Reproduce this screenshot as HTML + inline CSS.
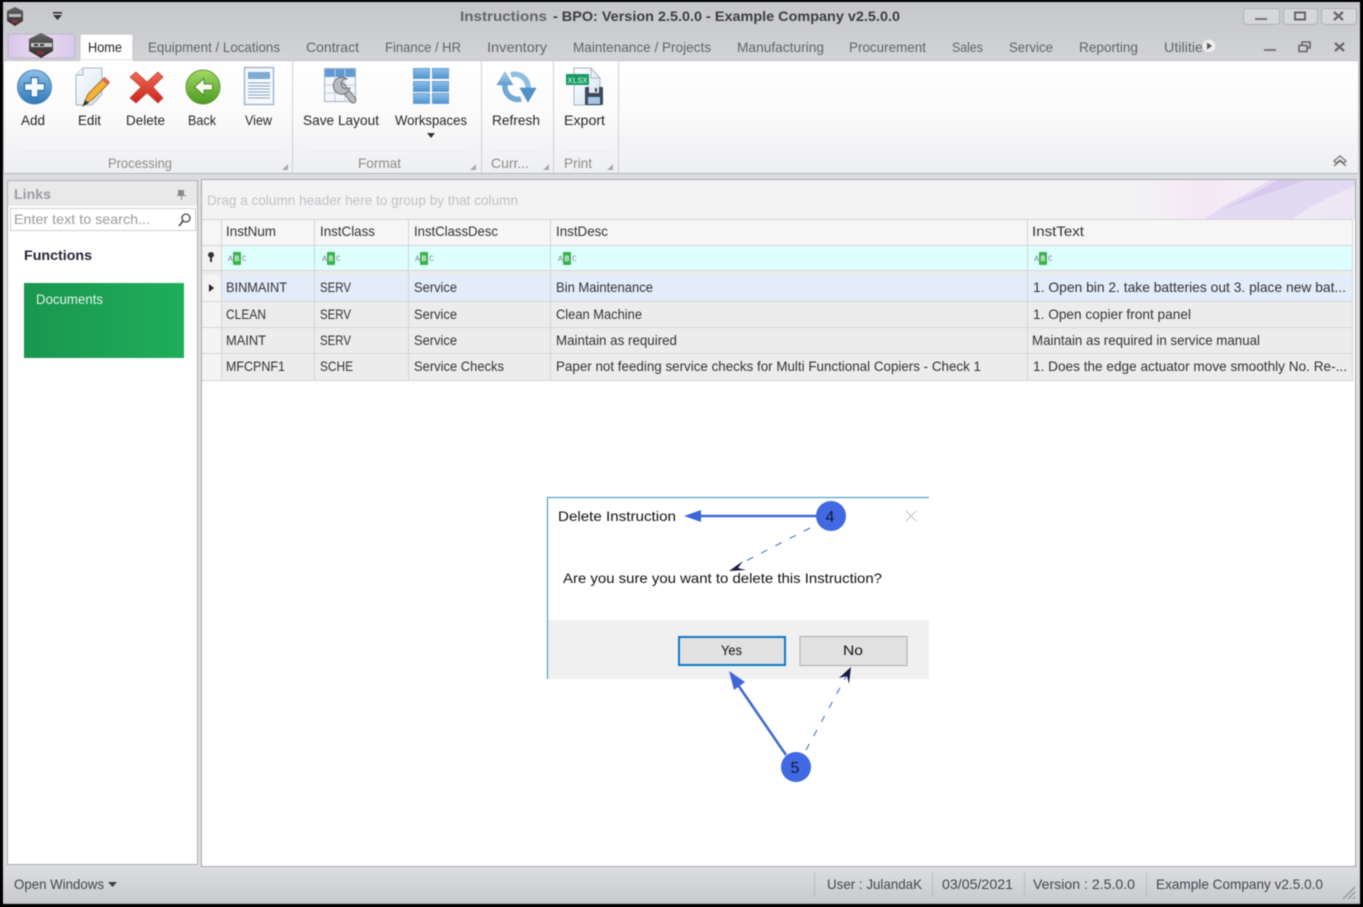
<!DOCTYPE html>
<html lang="en"><head><meta charset="utf-8"><title>Instructions - BPO</title>
<style>
html,body{margin:0;padding:0;background:#000;width:1363px;height:907px;overflow:hidden}
svg{display:block;filter:blur(.4px)}
text{font-family:"Liberation Sans",sans-serif;font-size:14px;fill:#444;white-space:pre}
.t{fill:#62646a}
.r{fill:#262626}
.g{fill:#8c8c8c}
.c{fill:#333}
.s{fill:#44464d}
.d{fill:#111}
.abc{font-family:"Liberation Mono",monospace;font-size:8px;fill:#78858c}
.abb{font-family:"Liberation Mono",monospace;font-size:8px;font-weight:bold;fill:#d8f5e0}
</style></head><body>
<svg width="1363" height="907" viewBox="0 0 1363 907" xmlns="http://www.w3.org/2000/svg">
<defs>
<linearGradient id="top" x1="0" y1="0" x2="0" y2="1"><stop offset="0" stop-color="#c6c7ca"/><stop offset="1" stop-color="#d2d3d7"/></linearGradient>
<linearGradient id="rib" x1="0" y1="0" x2="0" y2="1"><stop offset="0" stop-color="#fff"/><stop offset=".45" stop-color="#fbfbfc"/><stop offset="1" stop-color="#eeeff1"/></linearGradient>
<linearGradient id="stat" x1="0" y1="0" x2="0" y2="1"><stop offset="0" stop-color="#dcdde0"/><stop offset="1" stop-color="#c9cace"/></linearGradient>
<linearGradient id="lil" x1="0" y1="0" x2="1" y2="0"><stop offset="0" stop-color="#d7c6ec"/><stop offset=".5" stop-color="#ead9ee"/><stop offset="1" stop-color="#d9c8ea"/></linearGradient>
<linearGradient id="blueb" x1="0" y1="0" x2="0" y2="1"><stop offset="0" stop-color="#8fc0e8"/><stop offset="1" stop-color="#2f78b8"/></linearGradient>
<linearGradient id="greenb" x1="0" y1="0" x2="0" y2="1"><stop offset="0" stop-color="#a4d866"/><stop offset="1" stop-color="#4a9a22"/></linearGradient>
<linearGradient id="redb" x1="0" y1="0" x2="0" y2="1"><stop offset="0" stop-color="#ec6a55"/><stop offset="1" stop-color="#c8261c"/></linearGradient>
<linearGradient id="docg" x1="0" y1="0" x2="1" y2="1"><stop offset="0" stop-color="#fff"/><stop offset="1" stop-color="#d4e2f1"/></linearGradient>
<linearGradient id="green" x1="0" y1="0" x2="1" y2="0"><stop offset="0" stop-color="#1a9650"/><stop offset="1" stop-color="#1fae5a"/></linearGradient>
<linearGradient id="cell" x1="0" y1="0" x2="0" y2="1"><stop offset="0" stop-color="#8fc0ea"/><stop offset="1" stop-color="#4d94d2"/></linearGradient>
<linearGradient id="sw" x1="0" y1="0" x2="1" y2="0"><stop offset="0" stop-color="#f3f3f4"/><stop offset=".35" stop-color="#f3e8f4"/><stop offset=".5" stop-color="#f4eef6"/><stop offset="1" stop-color="#ece6f5"/></linearGradient>
<linearGradient id="hex" x1="0" y1="0" x2="0" y2="1"><stop offset="0" stop-color="#666"/><stop offset="1" stop-color="#2c2c2c"/></linearGradient>
<linearGradient id="rfa" x1="0" y1="0" x2="0" y2="1"><stop offset="0" stop-color="#b5d6ee"/><stop offset="1" stop-color="#5b9ccf"/></linearGradient>
</defs>

<!-- window frame -->
<rect x="0" y="0" width="1363" height="907" fill="#000"/>
<rect x="3" y="2" width="1357" height="902" fill="#dcdde0"/>
<rect x="3" y="2" width="1357" height="58" fill="url(#top)"/>

<!-- title bar -->
<polygon points="15,7 23,11 23,21 15,26 7,21 7,11" fill="url(#hex)"/>
<rect x="9" y="14" width="12" height="3" fill="#bbb"/><rect x="12" y="20" width="6" height="3" fill="#8b3a3a"/>
<rect x="53" y="12" width="9" height="1.6" fill="#333"/><polygon points="53,15 62,15 57.5,20" fill="#333"/>
<text x="460" y="21" class="t" style="font-weight:bold" textLength="87" lengthAdjust="spacingAndGlyphs">Instructions</text>
<text x="553" y="21" style="font-weight:bold;fill:#3c3d42" textLength="347" lengthAdjust="spacingAndGlyphs">- BPO: Version 2.5.0.0 - Example Company v2.5.0.0</text>
<rect x="1243.500" y="8.500" width="36" height="16" rx="3" fill="#d6d7da" stroke="#aeb0b4"/>
<rect x="1255" y="18" width="12" height="2" fill="#777"/>
<rect x="1283.500" y="8.500" width="34" height="16" rx="3" fill="#d6d7da" stroke="#aeb0b4"/>
<rect x="1295" y="12.500" width="10" height="7" fill="none" stroke="#666" stroke-width="2"/>
<rect x="1321.500" y="8.500" width="35" height="16" rx="3" fill="#d6d7da" stroke="#aeb0b4"/>
<path d="M1334 12l9 8M1343 12l-9 8" stroke="#666" stroke-width="2.200" fill="none"/>

<!-- app button + tabs -->
<rect x="8" y="34" width="67" height="24" rx="2" fill="url(#lil)" stroke="#bdb5cc"/>
<polygon points="41,33 53,39 53,51 41,58 29,51 29,39" fill="url(#hex)"/>
<rect x="31" y="43" width="21" height="4" fill="#c8c8c8"/><rect x="34" y="44" width="4" height="2" fill="#333"/><rect x="40" y="44" width="4" height="2" fill="#333"/>
<rect x="37" y="51" width="7" height="4" fill="#7d3535"/>
<path d="M80 60V36a2 2 0 0 1 2-2h49a2 2 0 0 1 2 2v24z" fill="#fff" stroke="#c4c5c9"/>
<text x="88" y="52" class="r" textLength="34" lengthAdjust="spacingAndGlyphs">Home</text>
<g>
<text x="148" y="52" class="t" textLength="132" lengthAdjust="spacingAndGlyphs">Equipment / Locations</text>
<text x="306" y="52" class="t" textLength="53" lengthAdjust="spacingAndGlyphs">Contract</text>
<text x="385" y="52" class="t" textLength="76" lengthAdjust="spacingAndGlyphs">Finance / HR</text>
<text x="487" y="52" class="t" textLength="60" lengthAdjust="spacingAndGlyphs">Inventory</text>
<text x="573" y="52" class="t" textLength="138" lengthAdjust="spacingAndGlyphs">Maintenance / Projects</text>
<text x="737" y="52" class="t" textLength="87" lengthAdjust="spacingAndGlyphs">Manufacturing</text>
<text x="849" y="52" class="t" textLength="77" lengthAdjust="spacingAndGlyphs">Procurement</text>
<text x="952" y="52" class="t" textLength="31" lengthAdjust="spacingAndGlyphs">Sales</text>
<text x="1009" y="52" class="t" textLength="44" lengthAdjust="spacingAndGlyphs">Service</text>
<text x="1079" y="52" class="t" textLength="59" lengthAdjust="spacingAndGlyphs">Reporting</text>
<text x="1164" y="52" class="t" textLength="39" lengthAdjust="spacingAndGlyphs">Utilitie</text>
</g>
<circle cx="1209" cy="46" r="7" fill="#eee" stroke="#ccc"/><polygon points="1207,42.500 1212,46 1207,49.500" fill="#555"/>
<rect x="1264" y="49" width="12" height="2" fill="#777"/>
<path d="M1299 45.500h8v6h-8zM1302 45v-3h8v6h-3" fill="none" stroke="#666" stroke-width="1.600"/>
<path d="M1335 43l9 8M1344 43l-9 8" stroke="#666" stroke-width="2.200" fill="none"/>

<!-- ribbon -->
<rect x="4" y="60" width="1354" height="113" fill="url(#rib)"/>
<path d="M4 60.500H80M133 60.500H1358" stroke="#c2c3c7"/>
<path d="M3.500 60V173M1358.500 60V173" stroke="#c5c6ca"/>
<path d="M4 173.500H1358" stroke="#b4b5b9"/>
<path d="M292.500 60V173M481.500 60V173M553.500 60V173M618.500 60V173" stroke="#cfd0d3"/>
<path d="M18 150.500H282M304 150.500H470M492 150.500H544M564 150.500H610" stroke="#ebebed"/>

<!-- add -->
<circle cx="34.500" cy="87" r="17" fill="url(#blueb)" stroke="#4d88ba"/>
<path d="M31 77.500h7v6h6.500v7H38v6.500h-7V90.500h-6.500v-7H31z" fill="#f4f9fd" stroke="#2d6ea8" stroke-width="1.200"/>
<!-- edit -->
<path d="M76 75l7-7h19v26l-10 11H76z" fill="url(#docg)" stroke="#a8b4c6"/>
<path d="M76 75h7v-7" fill="#eef" stroke="#a8b4c6"/>
<path d="M83 106l5-12 16-16 5 5-16 16z" fill="#f1b23c" stroke="#a86f1a"/>
<path d="M102 80l5 5 3-3-5-5z" fill="#d86a5a"/><path d="M83 106l2-6 4 3z" fill="#333"/>
<!-- delete -->
<path d="M136 72l11 10 11-10 5 5-10 10 10 11-5 5-11-10-11 10-6-5 11-11-11-10z" fill="url(#redb)" stroke="#c8483c" stroke-width=".8"/>
<!-- back -->
<circle cx="203" cy="87" r="17" fill="url(#greenb)" stroke="#5d9a32"/>
<path d="M194.500 87l9.500-8.500V84h8.500v6H204v5.500z" fill="#f8fcf2" stroke="#4f8f26"/>
<!-- view -->
<rect x="244.500" y="67.500" width="29" height="37" fill="#f5f9fe" stroke="#a2b8d2" stroke-width="1.500"/>
<rect x="248" y="72" width="22" height="7" fill="#7eaad4"/>
<path d="M248 83h22M248 86h22M248 89h22M248 92h22M248 95h22M248 98h22" stroke="#8ba2bc"/>
<!-- save layout -->
<rect x="324.500" y="68.500" width="31" height="33" fill="#f3f6fa" stroke="#9fb2c8"/>
<rect x="325" y="69" width="30" height="8" fill="#5f9ad2"/>
<path d="M335 69v32M345 69v32M325 85h30M325 93h30" stroke="#c2cedb"/>
<path d="M341 85L353 100" stroke="#6e7074" stroke-width="7" stroke-linecap="round"/>
<path d="M341 85L353 100" stroke="#b9bbbf" stroke-width="5" stroke-linecap="round"/>
<path d="M347 79a8.500 8.500 0 1 0 3 9l-5 1-3-2-1-4 3-4z" fill="#b9bbbf" stroke="#6e7074"/>
<!-- workspaces -->
<g fill="url(#cell)" stroke="#6e9fcc">
<rect x="413.500" y="68.500" width="16" height="10"/><rect x="432.500" y="68.500" width="16" height="10"/>
<rect x="413.500" y="81.500" width="16" height="10"/><rect x="432.500" y="81.500" width="16" height="10"/>
<rect x="413.500" y="93.500" width="16" height="10"/><rect x="432.500" y="93.500" width="16" height="10"/>
</g>
<!-- refresh -->
<path d="M505 85A13 13 0 0 0 521 99" fill="none" stroke="#6ea8d4" stroke-width="5.500"/>
<path d="M528 88A13 13 0 0 0 511 75" fill="none" stroke="#8dbfe2" stroke-width="5.500"/>
<polygon points="505,72 497,85 513,85" fill="url(#rfa)" stroke="#6a9fc8" stroke-width=".6"/>
<polygon points="528,102 520,88 536,88" fill="#4f93c9" stroke="#4a86b6" stroke-width=".6"/>
<!-- export -->
<path d="M574 68h17l9 10v27h-26z" fill="url(#docg)" stroke="#a8b4c6"/>
<path d="M591 68v10h9" fill="none" stroke="#a8b4c6"/>
<rect x="566" y="74" width="23" height="11" fill="#179a64"/>
<text x="567.500" y="83" style="font-family:'Liberation Mono',monospace;font-size:8px;fill:#d8ffe8" textLength="20" lengthAdjust="spacingAndGlyphs">XLSX</text>
<rect x="585" y="87" width="18" height="18" rx="1" fill="#3d4858"/>
<rect x="589" y="87" width="10" height="6" fill="#e4e8ee"/><rect x="595" y="88" width="2" height="4" fill="#3d4858"/>
<rect x="588" y="97" width="12" height="7" fill="#a5c5e4"/>

<!-- ribbon labels -->
<text x="21" y="125" class="r" textLength="24" lengthAdjust="spacingAndGlyphs">Add</text>
<text x="78" y="125" class="r" textLength="23" lengthAdjust="spacingAndGlyphs">Edit</text>
<text x="126" y="125" class="r" textLength="39" lengthAdjust="spacingAndGlyphs">Delete</text>
<text x="188" y="125" class="r" textLength="28" lengthAdjust="spacingAndGlyphs">Back</text>
<text x="245" y="125" class="r" textLength="27" lengthAdjust="spacingAndGlyphs">View</text>
<text x="303" y="125" class="r" textLength="76" lengthAdjust="spacingAndGlyphs">Save Layout</text>
<text x="395" y="125" class="r" textLength="72" lengthAdjust="spacingAndGlyphs">Workspaces</text>
<polygon points="427,133 435,133 431,138" fill="#333"/>
<text x="492" y="125" class="r" textLength="48" lengthAdjust="spacingAndGlyphs">Refresh</text>
<text x="564" y="125" class="r" textLength="41" lengthAdjust="spacingAndGlyphs">Export</text>
<text x="108" y="168" class="g" textLength="64" lengthAdjust="spacingAndGlyphs">Processing</text>
<text x="358" y="168" class="g" textLength="43" lengthAdjust="spacingAndGlyphs">Format</text>
<text x="491" y="168" class="g" textLength="38" lengthAdjust="spacingAndGlyphs">Curr...</text>
<text x="564" y="168" class="g" textLength="28" lengthAdjust="spacingAndGlyphs">Print</text>
<g fill="#aaa"><polygon points="282,170 288,170 288,164"/><polygon points="470,170 476,170 476,164"/><polygon points="543,170 549,170 549,164"/><polygon points="607,170 613,170 613,164"/></g>
<path d="M1334 161l6-5 6 5-2 2-4-3-4 3zM1334 166l6-5 6 5" fill="none" stroke="#777" stroke-width="1.300"/>

<!-- links panel -->
<rect x="7.500" y="180.500" width="190" height="684" fill="#fff" stroke="#aeafb3"/>
<rect x="8" y="181" width="189" height="25" fill="#e9e9ea"/>
<text x="14" y="199" style="font-weight:bold;fill:#9a9ca2" textLength="37" lengthAdjust="spacingAndGlyphs">Links</text>
<path d="M178 190h6v5h2v1h-4v4h-1v-4h-4v-1h1z" fill="#8a8a8a"/>
<rect x="10.500" y="208.500" width="185" height="22" fill="#fff" stroke="#d0d0d2"/>
<text x="14" y="224" style="fill:#9a9a9a" textLength="136" lengthAdjust="spacingAndGlyphs">Enter text to search...</text>
<circle cx="186" cy="218" r="4" fill="none" stroke="#444" stroke-width="1.300"/><path d="M183 221l-4 5" stroke="#444" stroke-width="1.600"/>
<text x="24" y="260" style="font-weight:bold;fill:#22253a" textLength="68" lengthAdjust="spacingAndGlyphs">Functions</text>
<rect x="24" y="283" width="160" height="75" fill="url(#green)"/>
<text x="36" y="304" style="fill:#dff3e6" textLength="67" lengthAdjust="spacingAndGlyphs">Documents</text>

<!-- grid area -->
<rect x="201.500" y="179.500" width="1154" height="687" fill="#fff" stroke="#a9aaae"/>
<rect x="202" y="180" width="1153" height="39" fill="#f3f3f4"/>
<rect x="1130" y="180" width="225" height="39" fill="url(#sw)"/>
<path d="M1205 219C1232 199 1252 192 1270 180H1355V186C1330 196 1310 206 1293 219z" fill="#e2d9f3"/>
<path d="M1222 210C1252 198 1280 190 1306 180H1278C1258 192 1240 200 1222 210z" fill="#d6caee"/>
<text x="207" y="205" style="fill:#c0c2c6" textLength="311" lengthAdjust="spacingAndGlyphs">Drag a column header here to group by that column</text>

<!-- grid header -->
<rect x="202" y="220" width="1151" height="25" fill="#f6f6f6"/>
<path d="M202 219.500H1353M202 245.500H1353" stroke="#d4d4d6"/>
<!-- filter row -->
<rect x="222" y="246" width="1131" height="24" fill="#dfffff"/>
<rect x="202" y="246" width="20" height="24" fill="#f3f3f3"/>
<path d="M202 270.500H1353" stroke="#d4d4d6"/>
<rect x="202" y="271" width="1151" height="4" fill="#ececee"/>
<path d="M208 255a3 3 0 1 1 6 0c0 2-2 2-2 3v4h-2v-4c0-1-2-1-2-3z" fill="#333"/>
<!-- rows -->
<rect x="202" y="275" width="20" height="105" fill="#f4f4f4"/>
<rect x="222" y="275" width="1131" height="26" fill="#e3ecf9"/>
<rect x="222" y="301" width="1131" height="79" fill="#ececec"/>
<path d="M202 301.500H1353M202 327.500H1353M202 353.500H1353M202 380.500H1353" stroke="#d6d6d8"/>
<path d="M221.500 220V380M314.500 220V380M408.500 220V380M550.500 220V380M1027.500 220V380M1352.500 220V380" stroke="#d4d4d6"/>
<polygon points="209,284 209,292 214,288" fill="#222"/>

<text x="226" y="236" class="c" textLength="50" lengthAdjust="spacingAndGlyphs">InstNum</text>
<text x="320" y="236" class="c" textLength="55" lengthAdjust="spacingAndGlyphs">InstClass</text>
<text x="414" y="236" class="c" textLength="84" lengthAdjust="spacingAndGlyphs">InstClassDesc</text>
<text x="556" y="236" class="c" textLength="52" lengthAdjust="spacingAndGlyphs">InstDesc</text>
<text x="1032" y="236" class="c" textLength="52" lengthAdjust="spacingAndGlyphs">InstText</text>

<!-- ABC filter icons -->
<g>
<rect x="233" y="252" width="8" height="13" rx="1" fill="#3cb04c"/><text x="228" y="261" class="abc" textLength="4">A</text><text x="234.500" y="261" class="abb" textLength="5">B</text><text x="242" y="261" class="abc" textLength="4">C</text>
<rect x="327" y="252" width="8" height="13" rx="1" fill="#3cb04c"/><text x="322" y="261" class="abc" textLength="4">A</text><text x="328.500" y="261" class="abb" textLength="5">B</text><text x="336" y="261" class="abc" textLength="4">C</text>
<rect x="420" y="252" width="8" height="13" rx="1" fill="#3cb04c"/><text x="415" y="261" class="abc" textLength="4">A</text><text x="421.500" y="261" class="abb" textLength="5">B</text><text x="429" y="261" class="abc" textLength="4">C</text>
<rect x="563" y="252" width="8" height="13" rx="1" fill="#3cb04c"/><text x="558" y="261" class="abc" textLength="4">A</text><text x="564.500" y="261" class="abb" textLength="5">B</text><text x="572" y="261" class="abc" textLength="4">C</text>
<rect x="1039" y="252" width="8" height="13" rx="1" fill="#3cb04c"/><text x="1034" y="261" class="abc" textLength="4">A</text><text x="1040.500" y="261" class="abb" textLength="5">B</text><text x="1048" y="261" class="abc" textLength="4">C</text>
</g>

<text x="226" y="292" class="c" textLength="61" lengthAdjust="spacingAndGlyphs">BINMAINT</text>
<text x="320" y="292" class="c" textLength="31" lengthAdjust="spacingAndGlyphs">SERV</text>
<text x="414" y="292" class="c" textLength="43" lengthAdjust="spacingAndGlyphs">Service</text>
<text x="556" y="292" class="c" textLength="97" lengthAdjust="spacingAndGlyphs">Bin Maintenance</text>
<text x="1033" y="292" class="c" textLength="313" lengthAdjust="spacingAndGlyphs">1. Open bin 2. take batteries out 3. place new bat...</text>

<text x="226" y="319" class="c" textLength="40" lengthAdjust="spacingAndGlyphs">CLEAN</text>
<text x="320" y="319" class="c" textLength="31" lengthAdjust="spacingAndGlyphs">SERV</text>
<text x="414" y="319" class="c" textLength="43" lengthAdjust="spacingAndGlyphs">Service</text>
<text x="556" y="319" class="c" textLength="86" lengthAdjust="spacingAndGlyphs">Clean Machine</text>
<text x="1033" y="319" class="c" textLength="158" lengthAdjust="spacingAndGlyphs">1. Open copier front panel</text>

<text x="226" y="345" class="c" textLength="40" lengthAdjust="spacingAndGlyphs">MAINT</text>
<text x="320" y="345" class="c" textLength="31" lengthAdjust="spacingAndGlyphs">SERV</text>
<text x="414" y="345" class="c" textLength="43" lengthAdjust="spacingAndGlyphs">Service</text>
<text x="556" y="345" class="c" textLength="121" lengthAdjust="spacingAndGlyphs">Maintain as required</text>
<text x="1032" y="345" class="c" textLength="228" lengthAdjust="spacingAndGlyphs">Maintain as required in service manual</text>

<text x="226" y="371" class="c" textLength="59" lengthAdjust="spacingAndGlyphs">MFCPNF1</text>
<text x="320" y="371" class="c" textLength="33" lengthAdjust="spacingAndGlyphs">SCHE</text>
<text x="414" y="371" class="c" textLength="90" lengthAdjust="spacingAndGlyphs">Service Checks</text>
<text x="556" y="371" class="c" textLength="425" lengthAdjust="spacingAndGlyphs">Paper not feeding service checks for Multi Functional Copiers - Check 1</text>
<text x="1033" y="371" class="c" textLength="314" lengthAdjust="spacingAndGlyphs">1. Does the edge actuator move smoothly No. Re-...</text>

<!-- dialog -->
<rect x="547" y="497" width="382" height="182" fill="#fff"/>
<rect x="548" y="620" width="381" height="59" fill="#f0f0f0"/>
<path d="M547.500 679V497.500H929" fill="none" stroke="#2f8fc8"/>
<text x="558" y="521" class="d" textLength="118" lengthAdjust="spacingAndGlyphs">Delete Instruction</text>
<path d="M905.500 510.500l11 11M916.500 510.500l-11 11" stroke="#c4c4c4" fill="none"/>
<text x="563" y="583" class="d" textLength="319" lengthAdjust="spacingAndGlyphs">Are you sure you want to delete this Instruction?</text>
<rect x="679" y="637" width="106" height="28" fill="#e1e1e1" stroke="#0f78c8" stroke-width="2"/>
<rect x="800" y="636.500" width="107" height="29" fill="#e1e1e1" stroke="#adadad"/>
<text x="721" y="655" class="d" textLength="21" lengthAdjust="spacingAndGlyphs">Yes</text>
<text x="843" y="655" class="d" textLength="20" lengthAdjust="spacingAndGlyphs">No</text>

<!-- callouts -->
<path d="M700 516H818" stroke="#4169d4" stroke-width="2.500"/>
<polygon points="684,516 701,510 701,522" fill="#3f66d8"/>
<path d="M810 528L738 565" stroke="#3f66c8" stroke-dasharray="7 9" fill="none"/>
<path d="M729 571l14-10-5 7 8 2z" fill="#141a44"/>
<circle cx="831" cy="516" r="15" fill="#4169e1"/>
<text x="825.500" y="522" style="font-size:16px;fill:#10183a">4</text>
<path d="M786 755L736 682" stroke="#4169d4" stroke-width="2.500"/>
<polygon points="729,671 745,682 734,690" fill="#3f66d8"/>
<path d="M806 750L847 675" stroke="#3f66c8" stroke-dasharray="7 9" fill="none"/>
<path d="M851 667l-2 17-2-8-8 2z" fill="#141a44"/>
<circle cx="796" cy="767" r="15" fill="#4169e1"/>
<text x="790.500" y="773" style="font-size:16px;fill:#10183a">5</text>

<!-- status bar -->
<rect x="3" y="867" width="1357" height="36" fill="url(#stat)"/>
<path d="M3 903.500H1360" stroke="#b0b1b5"/>
<text x="14" y="889" class="s" textLength="90" lengthAdjust="spacingAndGlyphs">Open Windows</text>
<polygon points="108,882 117,882 112.500,887" fill="#3c3e46"/>
<path d="M814.500 873V897M932.500 873V897M1024.500 873V897M1146.500 873V897" stroke="#b9babe"/>
<text x="827" y="889" class="s" textLength="95" lengthAdjust="spacingAndGlyphs">User : JulandaK</text>
<text x="942" y="889" class="s" textLength="71" lengthAdjust="spacingAndGlyphs">03/05/2021</text>
<text x="1033" y="889" class="s" textLength="102" lengthAdjust="spacingAndGlyphs">Version : 2.5.0.0</text>
<text x="1156" y="889" class="s" textLength="167" lengthAdjust="spacingAndGlyphs">Example Company v2.5.0.0</text>
<path d="M1343 899l12-12M1348 899l7-7M1353 899l2-2" stroke="#8d8e92" stroke-width="1.200"/>
</svg>
</body></html>
